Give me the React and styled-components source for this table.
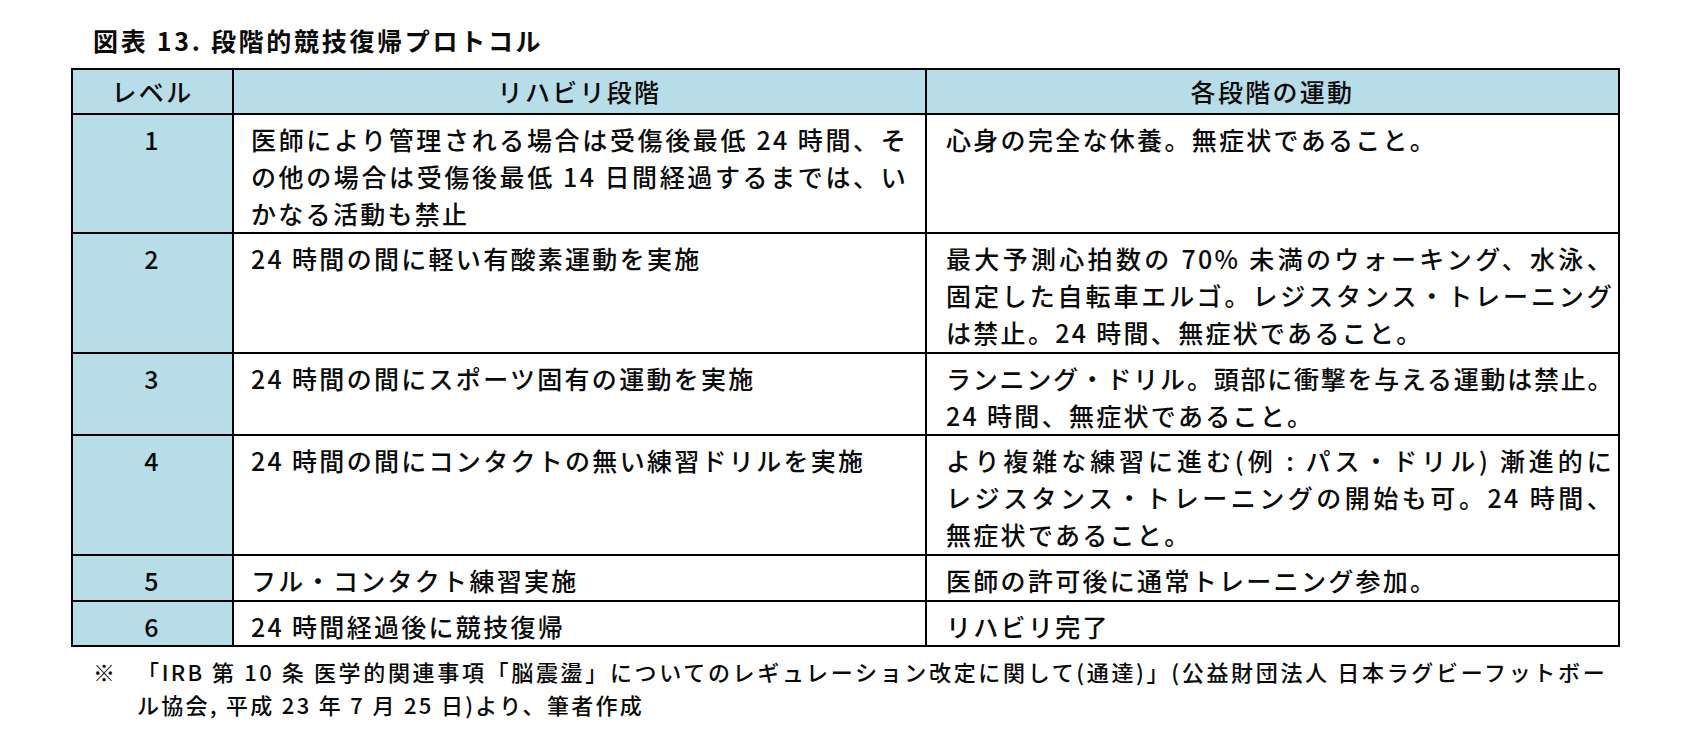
import styled, { createGlobalStyle } from 'styled-components'

const GlobalStyle = createGlobalStyle`
  html, body {
    margin: 0;
    padding: 0;
    background: #fff;
  }
  body {
    font-family: "Noto Sans CJK JP", "Noto Sans", sans-serif;
    color: #0a0a0a;
  }
`

const Page = styled.div`
  width: 1699px;
  height: 734px;
  box-sizing: border-box;
  padding: 24px 0 0 71px;
  overflow: hidden;
`

const Title = styled.h1`
  margin: 0 0 12px 22px;
  font-size: 25px;
  font-weight: 700;
  line-height: 32px;
  letter-spacing: 2.7px;
`

const Table = styled.table`
  border-collapse: collapse;
  table-layout: fixed;
  width: 1547px;
  font-size: 25px;
  font-weight: 500;
  letter-spacing: 2.3px;
  line-height: 36.8px;
`

const HeadCell = styled.th`
  width: ${p => p.$w}px;
  height: 45px;
  box-sizing: border-box;
  padding: 0;
  background: #b7dde8;
  border: 2px solid #000;
  font-weight: 500;
  text-align: center;
  vertical-align: middle;
`

const LevelCell = styled.td`
  padding: 6px 0 1px;
  background: #b7dde8;
  border: 2px solid #000;
  text-align: center;
  vertical-align: top;
`

const TextCell = styled.td`
  padding: 6px ${p => p.$right}px 1px ${p => p.$left}px;
  border: 2px solid #000;
  vertical-align: top;
  background: #fff;
`

const Line = styled.span`
  display: block;
  white-space: nowrap;
  text-align: left;
  text-align-last: ${p => (p.$full ? 'justify' : 'left')};
  ${p => p.$tight && 'letter-spacing: 1.4px;'}
`

const Note = styled.div`
  display: flex;
  margin: 8px 0 0 22px;
  font-size: 22px;
  font-weight: 500;
  line-height: 33px;
  letter-spacing: 2.3px;
`

const NoteMark = styled.span`
  width: 44px;
  flex-shrink: 0;
`

const NoteBody = styled.div`
  width: 1470px;
`

const rows = [
  {
    level: '1',
    stage: [
      ['医師により管理される場合は受傷後最低 24 時間、そ', true],
      ['の他の場合は受傷後最低 14 日間経過するまでは、い', true],
      ['かなる活動も禁止'],
    ],
    exercise: [['心身の完全な休養。無症状であること。']],
  },
  {
    level: '2',
    stage: [['24 時間の間に軽い有酸素運動を実施']],
    exercise: [
      ['最大予測心拍数の 70% 未満のウォーキング、水泳、', true],
      ['固定した自転車エルゴ。レジスタンス・トレーニング', true],
      ['は禁止。24 時間、無症状であること。'],
    ],
  },
  {
    level: '3',
    stage: [['24 時間の間にスポーツ固有の運動を実施']],
    exercise: [
      ['ランニング・ドリル。頭部に衝撃を与える運動は禁止。', true, true],
      ['24 時間、無症状であること。'],
    ],
  },
  {
    level: '4',
    stage: [['24 時間の間にコンタクトの無い練習ドリルを実施']],
    exercise: [
      ['より複雑な練習に進む(例 : パス・ドリル) 漸進的に', true],
      ['レジスタンス・トレーニングの開始も可。24 時間、', true],
      ['無症状であること。'],
    ],
  },
  {
    level: '5',
    stage: [['フル・コンタクト練習実施']],
    exercise: [['医師の許可後に通常トレーニング参加。']],
  },
  {
    level: '6',
    stage: [['24 時間経過後に競技復帰']],
    exercise: [['リハビリ完了']],
  },
]

const Lines = ({ items }) =>
  items.map(([text, full, tight], i) => (
    <Line key={i} $full={full} $tight={tight}>
      {text}
    </Line>
  ))

export default function App() {
  return (
    <>
      <GlobalStyle />
      <Page>
        <Title>図表 13. 段階的競技復帰プロトコル</Title>
        <Table>
          <thead>
            <tr>
              <HeadCell $w={161}>レベル</HeadCell>
              <HeadCell $w={693}>リハビリ段階</HeadCell>
              <HeadCell $w={693}>各段階の運動</HeadCell>
            </tr>
          </thead>
          <tbody>
            {rows.map(row => (
              <tr key={row.level}>
                <LevelCell>{row.level}</LevelCell>
                <TextCell $left={17} $right={17}>
                  <Lines items={row.stage} />
                </TextCell>
                <TextCell $left={19} $right={4}>
                  <Lines items={row.exercise} />
                </TextCell>
              </tr>
            ))}
          </tbody>
        </Table>
        <Note>
          <NoteMark>※</NoteMark>
          <NoteBody>
            <Line $full>
              「IRB 第 10 条 医学的関連事項「脳震盪」についてのレギュレーション改定に関して(通達)」(公益財団法人 日本ラグビーフットボー
            </Line>
            <Line>ル協会, 平成 23 年 7 月 25 日)より、筆者作成</Line>
          </NoteBody>
        </Note>
      </Page>
    </>
  )
}
